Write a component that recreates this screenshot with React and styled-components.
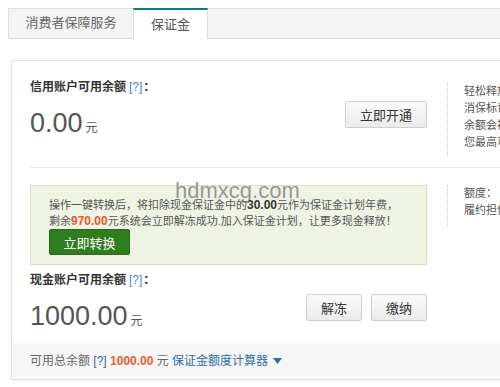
import React from 'react'
import styled, { createGlobalStyle } from 'styled-components'

const GlobalStyle = createGlobalStyle`
  html, body {
    margin: 0;
    padding: 0;
    background: #fff;
  }
  body {
    width: 500px;
    height: 387px;
    overflow: hidden;
    font-family: "Liberation Sans", "Noto Sans CJK SC", sans-serif;
    font-size: 11px;
    color: #555;
  }
`

const Page = styled.div`
  position: relative;
  padding: 8px 0 0 8px;
`

const TabBar = styled.div`
  display: flex;
  height: 29px;
  border-top: 1px solid #dcdcdc;
  border-bottom: 1px solid #d5d5d5;
  border-left: 1px solid #dcdcdc;
  background: #f4f4f4;
`

const Tab = styled.div`
  box-sizing: border-box;
  width: ${p => p.$w}px;
  text-align: center;
  font-size: 13px;
  line-height: 28px;
  color: #666;
  ${p => p.$active && `
    margin: -1px 0 -1px;
    height: 31px;
    line-height: 30px;
    background: #fff;
    color: #555;
    border-top: 2px solid #1f6f93;
    border-left: 1px solid #dcdcdc;
    border-right: 1px solid #dcdcdc;
  `}
`

const Panel = styled.div`
  margin: 21px 0 0 3px;
  width: 620px;
  border: 1px solid #e2e2e2;
  box-shadow: 0 1px 3px rgba(0, 0, 0, 0.08);
`

const Section = styled.div`
  display: flex;
  align-items: flex-start;
  margin-left: 18px;
  border-bottom: ${p => (p.$line ? '1px solid #e8e8e8' : 'none')};
`

const Main = styled.div`
  width: 397px;
  flex-shrink: 0;
  padding-top: ${p => p.$top}px;
  padding-bottom: ${p => p.$bottom}px;
`

const Side = styled.div`
  margin: ${p => p.$top}px 0 0 20px;
  height: ${p => p.$h}px;
  padding-left: 16px;
  border-left: 1px dotted #c4c4c4;
  line-height: 17px;
  white-space: nowrap;
  color: #555;
`

const Label = styled.div`
  margin-top: ${p => p.$top || 0}px;
  height: 16px;
  font-size: 12px;
  line-height: 16px;
  font-weight: bold;
  color: #333;
`

const Help = styled.span`
  font-weight: normal;
  color: #4a87c0;
  margin: 0 1px 0 3px;
`

const AmountRow = styled.div`
  display: flex;
  align-items: flex-start;
  justify-content: space-between;
  margin-top: 6px;
  height: 38px;
`

const Amount = styled.div`
  margin-top: 6px;
  height: 32px;
  font-size: 27px;
  line-height: 32px;
  color: #555;
`

const Unit = styled.span`
  font-size: 12px;
  line-height: 1;
  margin-left: 3px;
`

const Buttons = styled.div`
  display: flex;
  gap: 9px;
`

const GrayButton = styled.button`
  box-sizing: border-box;
  width: ${p => p.$w}px;
  height: 27px;
  padding: 0;
  border: 1px solid #cfcfcf;
  border-radius: 2px;
  background: linear-gradient(#fafafa, #ebebeb);
  font-family: inherit;
  font-size: 13px;
  color: #333;
`

const Notice = styled.div`
  border: 1px solid #d6dfc4;
  background: #eef3e4;
  padding: 11px 18px 9px;
  color: #555;
  white-space: nowrap;
`

const NoticeLine = styled.div`
  height: 16px;
  line-height: 16px;
`

const Num = styled.b`
  font-size: 12px;
  line-height: 1;
  color: ${p => p.$color || '#333'};
`

const GreenButton = styled.button`
  box-sizing: border-box;
  display: block;
  width: 81px;
  height: 26px;
  padding: 0;
  border: 1px solid #27691a;
  border-radius: 2px;
  background: #2f7d1f;
  font-family: inherit;
  font-size: 13px;
  color: #fff;
`

const Footer = styled.div`
  height: 36px;
  padding-left: 18px;
  background: #f6f6f6;
  font-size: 12px;
  line-height: 36px;
  color: #666;
  white-space: nowrap;
`

const Link = styled.span`
  color: #2a6fa8;
`

const Caret = styled.svg`
  margin-left: 5px;
  vertical-align: 1px;
`

const Watermark = styled.div`
  position: absolute;
  left: 175px;
  top: 180px;
  font-size: 22px;
  line-height: 22px;
  color: rgba(110, 110, 110, 0.7);
  pointer-events: none;
`

export default function App() {
  return (
    <Page>
      <GlobalStyle />
      <TabBar>
        <Tab $w={124}>消费者保障服务</Tab>
        <Tab $w={75} $active>保证金</Tab>
      </TabBar>

      <Panel>
        <Section $line>
          <Main $top={18} $bottom={28}>
            <Label>信用账户可用余额<Help>[?]</Help>：</Label>
            <AmountRow>
              <Amount>0.00<Unit>元</Unit></Amount>
              <GrayButton $w={82}>立即开通</GrayButton>
            </AmountRow>
          </Main>
          <Side $top={22} $h={74}>
            <div>轻松释放保证金</div>
            <div>消保标识不变</div>
            <div>余额会被冻结</div>
            <div>您最高可享</div>
          </Side>
        </Section>

        <Section>
          <Main $top={17} $bottom={11}>
            <Notice>
              <NoticeLine>操作一键转换后，将扣除现金保证金中的<Num>30.00</Num>元作为保证金计划年费，</NoticeLine>
              <NoticeLine>剩余<Num $color="#e85a27">970.00</Num>元系统会立即解冻成功.加入保证金计划，让更多现金释放！</NoticeLine>
              <GreenButton>立即转换</GreenButton>
            </Notice>
            <Label $top={7}>现金账户可用余额<Help>[?]</Help>：</Label>
            <AmountRow>
              <Amount>1000.00<Unit>元</Unit></Amount>
              <Buttons>
                <GrayButton $w={56}>解冻</GrayButton>
                <GrayButton $w={56}>缴纳</GrayButton>
              </Buttons>
            </AmountRow>
          </Main>
          <Side $top={17} $h={42}>
            <div>额度：</div>
            <div>履约担保额</div>
          </Side>
        </Section>

        <Footer>
          可用总余额 <Link>[?]</Link> <Num $color="#e8602c">1000.00</Num> 元 <Link>保证金额度计算器</Link>
          <Caret width="9" height="6" viewBox="0 0 9 6">
            <path d="M0 0H9L4.5 6Z" fill="#2a6fa8" />
          </Caret>
        </Footer>
      </Panel>

      <Watermark>hdmxcg.com</Watermark>
    </Page>
  )
}
